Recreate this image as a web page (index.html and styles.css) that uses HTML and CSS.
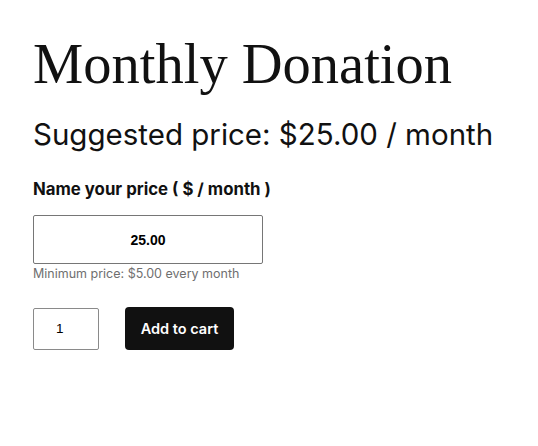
FILE: index.html
```html
<!DOCTYPE html>
<html lang="en">
<head>
<meta charset="utf-8">
<title>Monthly Donation</title>
<link rel="stylesheet" href="styles.css">
</head>
<body>
<main class="product">
  <h1 class="product-title">Monthly Donation</h1>
  <p class="suggested">Suggested price: $25.00 / month</p>
  <form class="cart">
    <label class="nyp-label" for="nyp">Name your price ( $ / month )</label>
    <input class="nyp-input" id="nyp" type="text" value="25.00">
    <p class="minimum">Minimum price: $5.00 every month</p>
    <div class="actions">
      <input class="qty" type="number" value="1">
      <button class="add-btn" type="button">Add to cart</button>
    </div>
  </form>
</main>
</body>
</html>
```

FILE: styles.css
```css
html, body {
  margin: 0;
  padding: 0;
  background: #ffffff;
}

body {
  font-family: "Inter", "Liberation Sans", sans-serif;
  color: #111111;
}

.product {
  padding: 29px 33px 0 33px;
}

.product-title {
  margin: 0;
  font-family: "Liberation Serif", "Times New Roman", serif;
  font-weight: 400;
  font-size: 56.5px;
  line-height: 70px;
  color: #111111;
}

.suggested {
  margin: 15px 0 0 0;
  font-size: 29.5px;
  line-height: 40px;
  font-weight: 400;
}

.cart {
  margin-top: 23px;
  display: flex;
  flex-direction: column;
  align-items: flex-start;
}

.nyp-label {
  font-size: 16.8px;
  font-weight: 700;
  line-height: 24px;
}

.nyp-input {
  margin-top: 14px;
  box-sizing: border-box;
  width: 230px;
  height: 49px;
  border: 1px solid #767676;
  border-radius: 2px;
  text-align: center;
  font-family: "Liberation Sans", Arial, sans-serif;
  font-weight: 700;
  font-size: 14px;
  color: #000000;
  background: #ffffff;
  padding: 0;
}

.minimum {
  margin: 1px 0 0 0;
  font-size: 12.5px;
  line-height: 18px;
  color: #6f6f6f;
}

.actions {
  margin-top: 24px;
  display: flex;
  align-items: center;
  gap: 26px;
}

.qty {
  box-sizing: border-box;
  width: 66px;
  height: 42px;
  border: 1px solid #8a8a8a;
  border-radius: 2px;
  padding: 0 0 0 22px;
  font-family: "Liberation Sans", Arial, sans-serif;
  font-size: 13.5px;
  color: #000000;
  background: #ffffff;
  -moz-appearance: textfield;
  appearance: textfield;
}

.qty::-webkit-inner-spin-button,
.qty::-webkit-outer-spin-button {
  -webkit-appearance: none;
  margin: 0;
}

.add-btn {
  box-sizing: border-box;
  width: 109px;
  height: 43px;
  border: none;
  border-radius: 4px;
  background: #111111;
  color: #ffffff;
  font-family: "Inter", "Liberation Sans", sans-serif;
  font-weight: 600;
  font-size: 14.5px;
  padding: 0;
  cursor: pointer;
}
```
